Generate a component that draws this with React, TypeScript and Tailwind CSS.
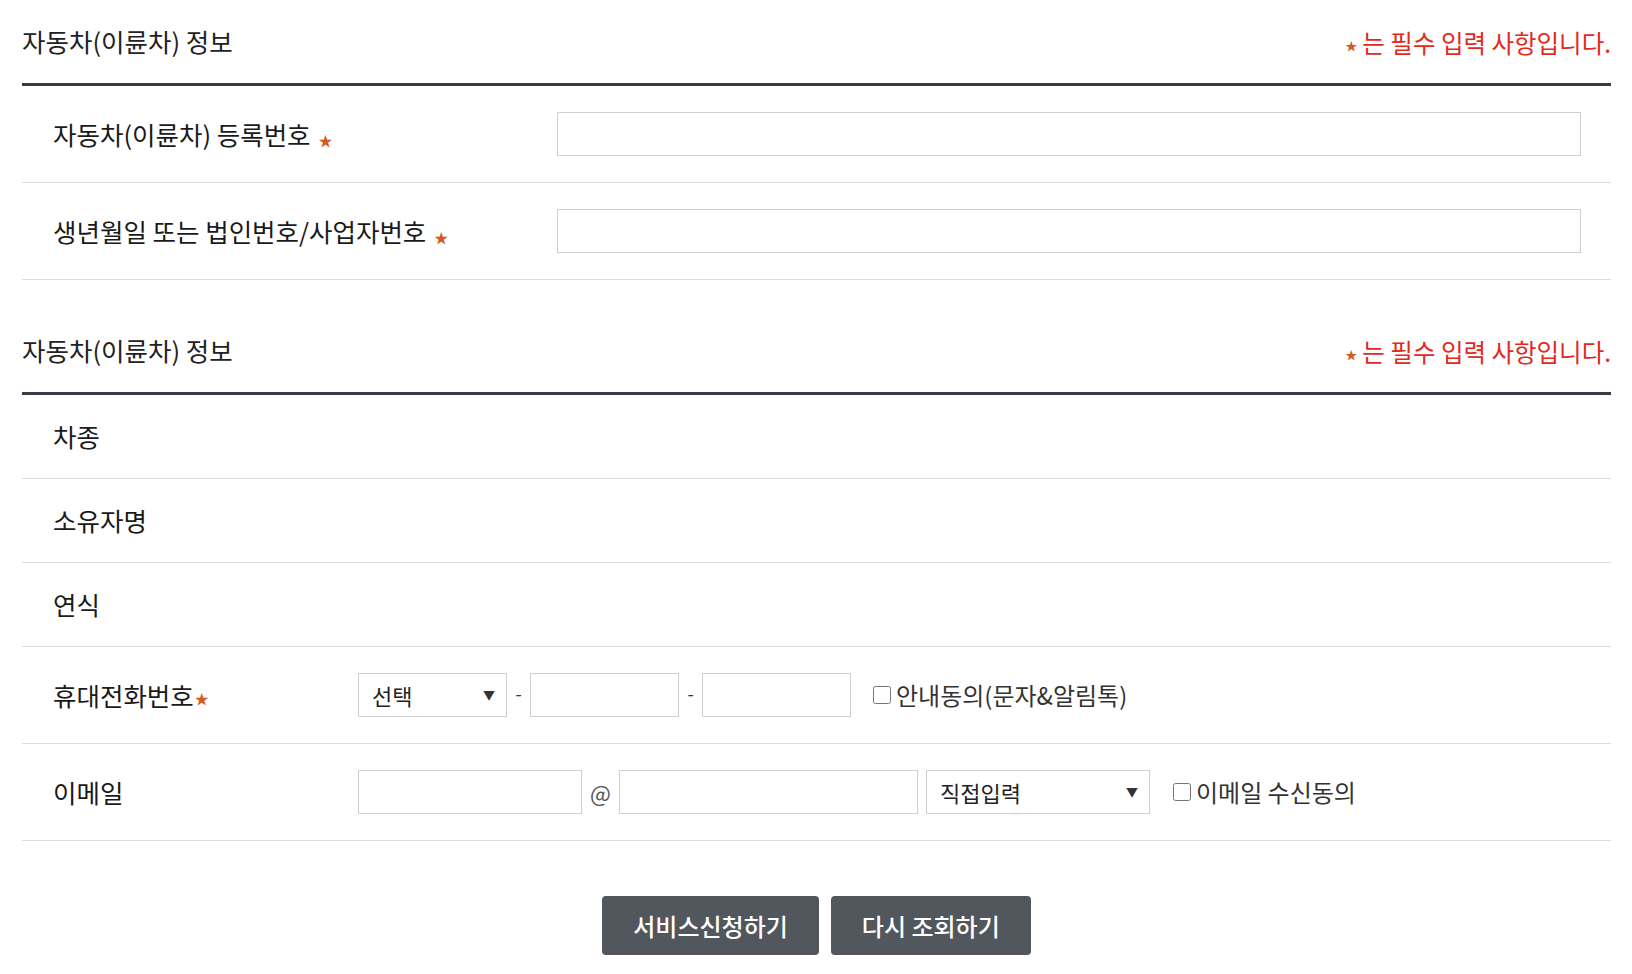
import React from 'react'

// Vehicle (two-wheeler) info form

const Star = ({ gap = true }: { gap?: boolean }) => (
  <span
    className={`${gap ? 'ml-[8px] top-[1px]' : 'ml-[1px] -top-[2px]'} relative text-[14px] text-[#d3591c]`}
  >
    ★
  </span>
)

const SectionHeader = ({ title }: { title: string }) => (
  <div className="flex h-[86px] items-center justify-between border-b-[3px] border-[#383a45]">
    <h2 className="text-[25.5px] font-normal text-[#222]">{title}</h2>
    <p className="relative top-[2px] flex items-center text-[24.5px] text-[#e3281c]">
      <span className="mr-[5px] relative top-[2px] text-[12px] text-[#d3591c]">★</span>
      는 필수 입력 사항입니다.
    </p>
  </div>
)

const TextInput = ({ className }: { className: string }) => (
  <input type="text" className={`h-[44px] border border-[#cfcfcf] bg-white outline-none ${className}`} />
)

const FakeSelect = ({ label, className }: { label: string; className: string }) => (
  <div className={`flex h-[44px] items-center justify-between border border-[#cfcfcf] bg-white pl-[13px] pr-[11px] ${className}`}>
    <span className="text-[22px] text-[#222]">{label}</span>
    <span className="text-[12px] text-[#333]">▼</span>
  </div>
)

const Check = ({ label }: { label: string }) => (
  <label className="flex items-center text-[24px] text-[#333]">
    <input type="checkbox" className="mr-[5px] h-[18px] w-[18px]" />
    {label}
  </label>
)

const App = () => {
  return (
    <div className="min-h-screen bg-white pl-[22px] pr-[21px] font-['Noto_Sans_CJK_KR',sans-serif] text-[#1a1a1a]">
      {/* 조회 영역 */}
      <SectionHeader title="자동차(이륜차) 정보" />
      <div className="grid grid-cols-[535px_1fr] items-center border-b border-[#dcdcdc] py-[26px] pr-[30px]">
        <div className="pl-[31px] text-[25.5px]">
          자동차(이륜차) 등록번호
          <Star />
        </div>
        <TextInput className="w-full" />
      </div>
      <div className="grid grid-cols-[535px_1fr] items-center border-b border-[#dcdcdc] py-[26px] pr-[30px]">
        <div className="pl-[31px] text-[25.5px]">
          생년월일 또는 법인번호/사업자번호
          <Star />
        </div>
        <TextInput className="w-full" />
      </div>

      {/* 결과 영역 */}
      <div className="mt-[29px]">
        <SectionHeader title="자동차(이륜차) 정보" />
        {['차종', '소유자명', '연식'].map((label) => (
          <div key={label} className="flex h-[84px] items-center border-b border-[#dcdcdc] pl-[31px] text-[25.5px]">
            {label}
          </div>
        ))}

        <div className="grid grid-cols-[336px_1fr] items-center border-b border-[#dcdcdc] py-[26px]">
          <div className="pl-[31px] text-[25.5px]">
            휴대전화번호
            <Star gap={false} />
          </div>
          <div className="flex items-center">
            <FakeSelect label="선택" className="w-[149px]" />
            <span className="relative -top-[2px] w-[23px] text-center text-[18px] text-[#333]">-</span>
            <TextInput className="w-[149px]" />
            <span className="relative -top-[2px] w-[23px] text-center text-[18px] text-[#333]">-</span>
            <TextInput className="w-[149px]" />
            <div className="ml-[22px]">
              <Check label="안내동의(문자&알림톡)" />
            </div>
          </div>
        </div>

        <div className="grid grid-cols-[336px_1fr] items-center border-b border-[#dcdcdc] py-[26px]">
          <div className="pl-[31px] text-[25.5px]">이메일</div>
          <div className="flex items-center">
            <TextInput className="w-[224px]" />
            <span className="w-[37px] text-center text-[22px] text-[#555]">@</span>
            <TextInput className="w-[299px]" />
            <FakeSelect label="직접입력" className="ml-[8px] w-[224px]" />
            <div className="ml-[23px]">
              <Check label="이메일 수신동의" />
            </div>
          </div>
        </div>
      </div>

      {/* 버튼 */}
      <div className="mt-[55px] flex justify-center gap-[12px]">
        <button className="h-[59px] rounded-[4px] bg-[#52565d] px-[31px] text-[24px] font-medium text-white">
          서비스신청하기
        </button>
        <button className="h-[59px] rounded-[4px] bg-[#52565d] px-[31px] text-[24px] font-medium text-white">
          다시 조회하기
        </button>
      </div>
    </div>
  )
}

export default App
